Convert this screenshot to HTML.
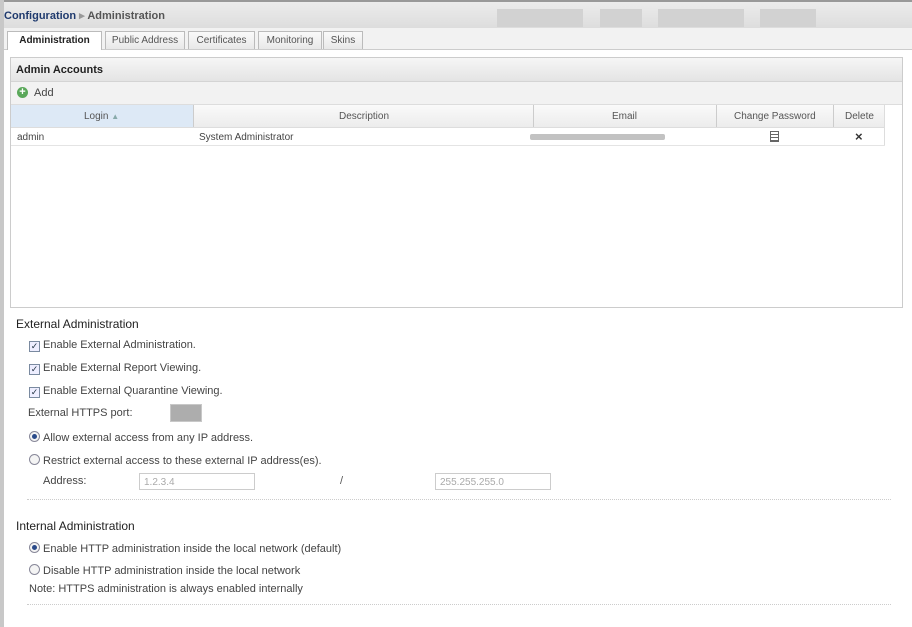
<!DOCTYPE html>
<html><head><style>
body{margin:0;width:912px;height:627px;background:#fff;font-family:"Liberation Sans",sans-serif;font-size:11px;color:#333;position:relative;overflow:hidden}
.a{position:absolute}
.lb{left:0;top:0;width:4px;height:627px;background:#c8c8c8}
.top{left:0;top:0;width:912px;height:28px;background:linear-gradient(#ececec,#dcdcdc);border-top:2px solid #999}
.tabbar{left:4px;top:28px;width:908px;height:21px;background:#f2f2f2;border-bottom:1px solid #ccc}
.tab{position:absolute;top:31px;height:17px;border:1px solid #bbb;border-bottom:none;background:linear-gradient(#fafafa,#e8e8e8);font-size:10px;color:#555;line-height:17px;text-align:center}
.panel{left:10px;top:57px;width:891px;height:249px;border:1px solid #ccc;background:#fff}
.cb{display:inline-block;width:9px;height:9px;border:1px solid #7a8aa0;background:#eef;vertical-align:-1px;margin-right:3px;font-size:9px;line-height:9px;text-align:center;color:#234}
.rd{display:inline-block;width:9px;height:9px;border:1px solid #889;border-radius:50%;vertical-align:-1px;margin-right:3px;background:#f4f4f4;position:relative}
.rd.on::after{content:"";position:absolute;left:2px;top:2px;width:5px;height:5px;border-radius:50%;background:#2a4a8a}
.t{font-size:11px;color:#444}
.h{font-size:12px;color:#222}
.in{height:17px;border:1px solid #ccc;color:#aaa;font-size:10px;line-height:17px;padding-left:4px;box-sizing:border-box}
.dot{height:0;border-top:1px dotted #ccc}
</style></head><body>
<div class="a top"></div>
<div class="a" style="left:497px;top:9px;width:86px;height:18px;background:#d2d2d2"></div>
<div class="a" style="left:600px;top:9px;width:42px;height:18px;background:#d2d2d2"></div>
<div class="a" style="left:658px;top:9px;width:86px;height:18px;background:#d2d2d2"></div>
<div class="a" style="left:760px;top:9px;width:56px;height:18px;background:#d2d2d2"></div>
<div class="a" style="left:4px;top:9px;font-size:11px;color:#1f3a6e;font-weight:bold">Configuration <span style="color:#999">▸</span> <span style="color:#555">Administration</span></div>
<div class="a tabbar"></div>
<div class="tab" style="left:7px;width:93px;background:#fff;color:#222;font-weight:bold;height:18px">Administration</div>
<div class="tab" style="left:105px;width:78px">Public Address</div>
<div class="tab" style="left:188px;width:65px">Certificates</div>
<div class="tab" style="left:258px;width:62px">Monitoring</div>
<div class="tab" style="left:323px;width:38px">Skins</div>
<div class="a lb"></div>
<div class="a panel"></div>
<div class="a" style="left:11px;top:58px;width:891px;height:23px;background:linear-gradient(#f6f6f6,#e4e4e4);border-bottom:1px solid #d4d4d4"></div>
<div class="a" style="left:16px;top:64px;font-weight:bold;font-size:11px;color:#222">Admin Accounts</div>
<div class="a" style="left:11px;top:82px;width:891px;height:22px;background:#f2f2f2;border-bottom:1px solid #ddd"></div>
<div class="a" style="left:17px;top:87px;width:11px;height:11px;border-radius:50%;background:#5aa85a;color:#fff;font-size:11px;line-height:11px;text-align:center;font-weight:bold">+</div>
<div class="a t" style="left:34px;top:87px">Add</div>
<div class="a" style="left:11px;top:105px;width:874px;height:22px;background:linear-gradient(#fafafa,#ececec);border-bottom:1px solid #ddd"></div>
<div class="a" style="left:11px;top:105px;width:182px;height:22px;background:#dde9f6"></div>
<div class="a" style="left:193px;top:105px;width:1px;height:22px;background:#ccc"></div>
<div class="a" style="left:533px;top:105px;width:1px;height:22px;background:#ccc"></div>
<div class="a" style="left:716px;top:105px;width:1px;height:22px;background:#ccc"></div>
<div class="a" style="left:833px;top:105px;width:1px;height:22px;background:#ccc"></div>
<div class="a" style="left:884px;top:105px;width:1px;height:40px;background:#ddd"></div>
<div class="a t" style="left:84px;top:111px;color:#555;font-size:10px">Login <span style="color:#8aa;font-size:8px">▲</span></div>
<div class="a t" style="left:339px;top:111px;color:#555;font-size:10px">Description</div>
<div class="a t" style="left:612px;top:111px;color:#555;font-size:10px">Email</div>
<div class="a t" style="left:734px;top:111px;color:#555;font-size:10px">Change Password</div>
<div class="a t" style="left:845px;top:111px;color:#555;font-size:10px">Delete</div>
<div class="a" style="left:11px;top:145px;width:874px;border-top:1px solid #e4e4e4"></div>
<div class="a t" style="left:17px;top:132px;font-size:10px">admin</div>
<div class="a t" style="left:199px;top:132px;font-size:10px">System Administrator</div>
<div class="a" style="left:530px;top:134px;width:135px;height:6px;background:#999;border-radius:2px;opacity:.6"></div>
<div class="a" style="left:770px;top:131px;width:9px;height:11px;border:1px solid #666;box-sizing:border-box;background:repeating-linear-gradient(#fff 0 2px,#666 2px 3px)"></div>
<div class="a" style="left:855px;top:129px;font-size:13px;font-weight:bold">×</div>
<div class="a h" style="left:16px;top:317px">External Administration</div>
<div class="a t" style="left:29px;top:339px"><span class="cb">✓</span>Enable External Administration.</div>
<div class="a t" style="left:29px;top:362px"><span class="cb">✓</span>Enable External Report Viewing.</div>
<div class="a t" style="left:29px;top:385px"><span class="cb">✓</span>Enable External Quarantine Viewing.</div>
<div class="a t" style="left:28px;top:407px">External HTTPS port:</div>
<div class="a" style="left:170px;top:404px;width:30px;height:16px;border:1px solid #bbb;background:#999;opacity:.8"></div>
<div class="a t" style="left:29px;top:431px"><span class="rd on"></span>Allow external access from any IP address.</div>
<div class="a t" style="left:29px;top:454px"><span class="rd"></span>Restrict external access to these external IP address(es).</div>
<div class="a t" style="left:43px;top:475px">Address:</div>
<div class="a in" style="left:139px;top:473px;width:116px">1.2.3.4</div>
<div class="a t" style="left:340px;top:475px;color:#555">/</div>
<div class="a in" style="left:435px;top:473px;width:116px">255.255.255.0</div>
<div class="a dot" style="left:27px;top:499px;width:864px"></div>
<div class="a h" style="left:16px;top:519px">Internal Administration</div>
<div class="a t" style="left:29px;top:542px"><span class="rd on"></span>Enable HTTP administration inside the local network (default)</div>
<div class="a t" style="left:29px;top:564px"><span class="rd"></span>Disable HTTP administration inside the local network</div>
<div class="a t" style="left:29px;top:583px">Note: HTTPS administration is always enabled internally</div>
<div class="a dot" style="left:27px;top:604px;width:864px"></div>
</body></html>
